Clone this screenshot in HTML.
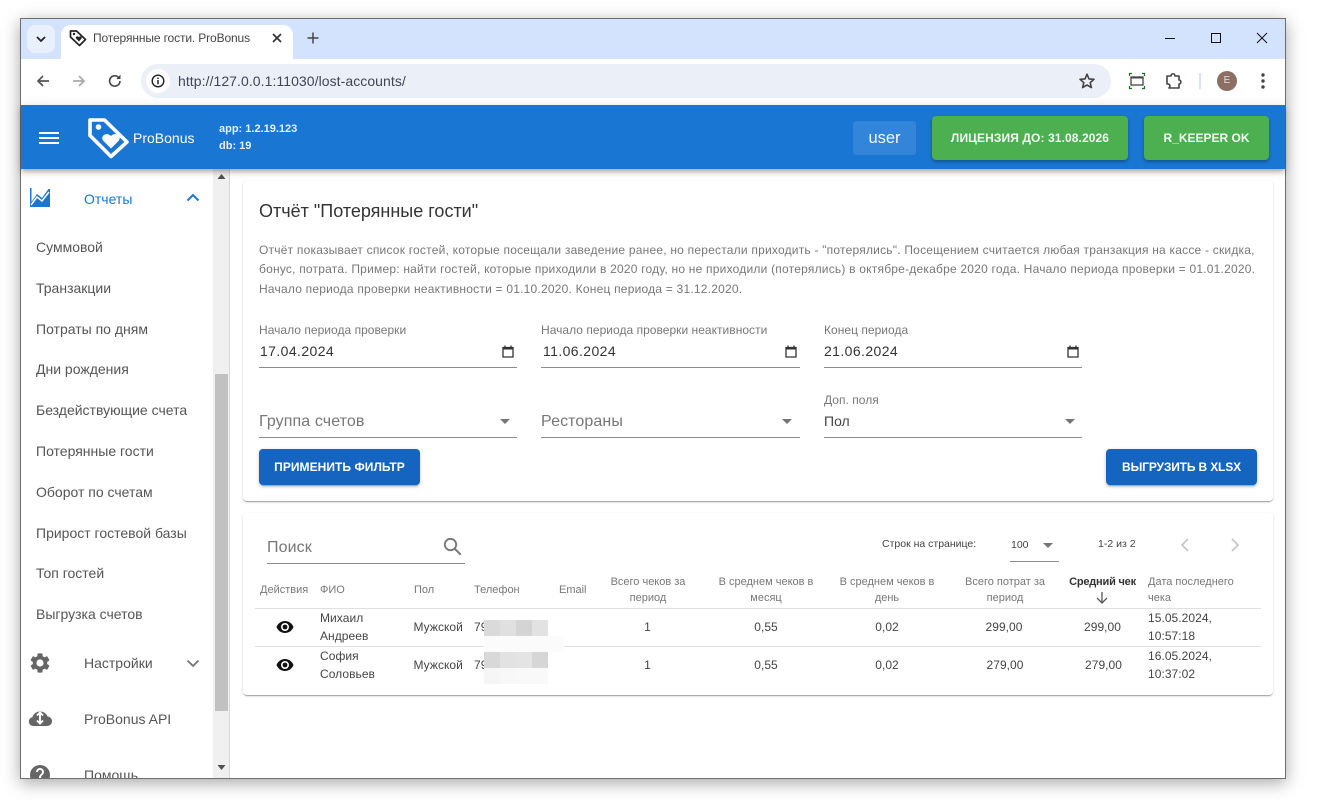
<!DOCTYPE html>
<html lang="ru"><head><meta charset="utf-8"><title>Потерянные гости. ProBonus</title>
<style>
html,body{margin:0;padding:0;background:#fff;width:1318px;height:800px;overflow:hidden}
body{font-family:"Liberation Sans",sans-serif;position:relative}
div,span,svg{position:absolute}
.t{white-space:nowrap;line-height:20px;height:20px}
.c{text-align:center;transform:translateX(-50%)}
.nav{left:15px;font-size:14px;color:#555;letter-spacing:0}
.card{background:#fff;border-radius:4px;box-shadow:0 2px 1px -1px rgba(0,0,0,.2),0 1px 1px rgba(0,0,0,.14),0 1px 3px rgba(0,0,0,.12)}
.lbl{font-size:12px;color:#777;letter-spacing:.03px}
.val{font-size:14px;color:#333;letter-spacing:.4px}
.line{border-top:1px solid #8c8c8c;box-sizing:border-box;height:2px;background:none}
.ph{font-size:16px;color:#777;letter-spacing:.1px}
.btn{background:#1565c0;border-radius:4px;color:#fff;font-weight:bold;font-size:12px;text-align:center;line-height:36px;letter-spacing:.05px;box-shadow:0 3px 1px -2px rgba(0,0,0,.2),0 2px 2px rgba(0,0,0,.14),0 1px 5px rgba(0,0,0,.12)}
.th{font-size:11px;color:#777;line-height:16px;white-space:nowrap;letter-spacing:0}
.td{font-size:12px;color:#444;white-space:nowrap;line-height:18px;letter-spacing:.05px}
.hr{height:1px;background:#e0e0e0;left:255px;width:1006px}
.arrow{width:0;height:0;border-left:5px solid transparent;border-right:5px solid transparent;border-top:5px solid #757575}
</style></head><body>
<!-- window -->
<div style="left:20px;top:18px;width:1266px;height:761px;background:#fff;border:1px solid #6e6e6e;box-sizing:border-box;box-shadow:0 4px 16px rgba(0,0,0,.35);overflow:hidden">
<div style="left:0;top:0;width:1264px;height:40px;background:#d3e3fd"></div>
<div style="left:0;top:40px;width:1264px;height:46px;background:#fff;border-radius:8px 8px 0 0;border-bottom:1px solid #d5d9e0;box-sizing:content-box"></div>
<div style="left:6px;top:6px;width:28px;height:28px;border-radius:8px;background:#e9f0fd"></div>
<svg style="left:13px;top:13px" width="14" height="14" viewBox="0 0 14 14"><path d="M3 5l4 4 4-4" fill="none" stroke="#222" stroke-width="1.8"/></svg>
<div style="left:40px;top:6px;width:232px;height:34px;background:#fff;border-radius:10px 10px 0 0"></div>
<svg style="left:48px;top:10px" width="18" height="18" viewBox="0 0 18 18"><path d="M1.500 2h6l9 8.500-6 6L1.500 8z" fill="none" stroke="#222" stroke-width="1.700" stroke-linejoin="round"/><circle cx="5" cy="5" r="1.200" fill="#222"/><path d="M9.500 13l-3-3c-1-1.500 1.500-3 3-1.500 1.500-1.500 3.500 0 2.500 1.500z" fill="#222" transform="translate(.5 -.5)"/></svg>
</div>
<div class="t" style="left:93px;top:28px;font-size:12px;color:#444;letter-spacing:-.13px">Потерянные гости. ProBonus</div>
<svg style="left:271px;top:32px" width="12" height="12" viewBox="0 0 12 12"><path d="M2 2l8 8M10 2l-8 8" stroke="#333" stroke-width="1.700"/></svg>
<svg style="left:306px;top:31px" width="14" height="14" viewBox="0 0 14 14"><path d="M7 1.500v11M1.500 7h11" stroke="#444" stroke-width="1.500"/></svg>
<svg style="left:1165px;top:38px" width="11" height="2"><rect width="10" height="1" fill="#111"/></svg>
<svg style="left:1211px;top:33px" width="12" height="12"><rect x=".5" y=".5" width="9" height="9" fill="none" stroke="#111"/></svg>
<svg style="left:1256px;top:32px" width="12" height="12"><path d="M1 1l10 10M11 1L1 11" stroke="#111" stroke-width="1"/></svg>
<svg style="left:35px;top:73px" width="16" height="16" viewBox="0 0 16 16"><path d="M14 8H3M8 3L3 8l5 5" fill="none" stroke="#555" stroke-width="1.700"/></svg>
<svg style="left:71px;top:73px" width="16" height="16" viewBox="0 0 16 16"><path d="M2 8h11M8 3l5 5-5 5" fill="none" stroke="#aaa" stroke-width="1.700"/></svg>
<svg style="left:107px;top:73px" width="16" height="16" viewBox="0 0 16 16"><path d="M13 8a5.200 5.200 0 1 1-1.500-3.700" fill="none" stroke="#444" stroke-width="1.600"/><path d="M13.500 1.800v4.200H9.300z" fill="#444"/></svg>
<div style="left:141px;top:64px;width:970px;height:34px;border-radius:17px;background:#ebeff8"></div>
<div style="left:146px;top:69px;width:24px;height:24px;border-radius:12px;background:#fff"></div>
<svg style="left:151px;top:74px" width="14" height="14" viewBox="0 0 14 14"><circle cx="7" cy="7" r="5.800" fill="none" stroke="#222" stroke-width="1.400"/><path d="M7 6v4.200M7 3.600v1.400" stroke="#222" stroke-width="1.500"/></svg>
<div class="t" style="left:178px;top:71px;font-size:14px;color:#3f4654;letter-spacing:.065px">http://127.0.0.1:11030/lost-accounts/</div>
<svg style="left:1078px;top:72px" width="18" height="18" viewBox="0 0 18 18"><path d="M9 2.200l2 4.700 5 .4-3.800 3.300 1.200 5L9 13l-4.400 2.600 1.200-5L2 7.300l5-.4z" fill="none" stroke="#444" stroke-width="1.600" stroke-linejoin="round"/></svg>
<svg style="left:1128px;top:72px" width="18" height="18" viewBox="0 0 18 18"><rect x="3" y="5" width="12" height="8" fill="none" stroke="#444" stroke-width="1.300"/><rect x="3" y="4.500" width="12" height="2" fill="#444"/><path d="M1.500 4V1.500H4M14 1.500h2.500V4M1.500 14v2.500H4M14 16.500h2.500V14" fill="none" stroke="#1b6e20" stroke-width="1.200"/></svg>
<svg style="left:1165px;top:72px" width="18" height="18" viewBox="0 0 18 18"><path d="M2 4h4c0-3 4-3 4 0h4v4c2.500 0 2.500 4 0 4v4H4c1.500-1.500 1-4-1-4H2z" fill="none" stroke="#444" stroke-width="1.600" stroke-linejoin="round"/></svg>
<div style="left:1199px;top:73px;width:2px;height:16px;background:#d3e3fd"></div>
<div style="left:1217px;top:71px;width:20px;height:20px;border-radius:10px;background:#8d6e63;color:#e8e0dc;font-size:10px;line-height:20px;text-align:center">E</div>
<svg style="left:1260px;top:73px" width="6" height="16"><circle cx="3" cy="2" r="1.700" fill="#444"/><circle cx="3" cy="8" r="1.700" fill="#444"/><circle cx="3" cy="14" r="1.700" fill="#444"/></svg>

<!-- content region -->
<div style="left:21px;top:169px;width:1264px;height:609px;background:#fff;overflow:hidden">
  <div style="left:0;top:0;width:192px;height:609px;background:#fff"></div>
  <div style="left:192px;top:0;width:16px;height:609px;background:#f0f0f0;border-right:1px solid #d8d8d8"></div>
  <div style="left:194px;top:205px;width:13px;height:337px;background:#c1c1c1"></div>
  <svg style="left:196px;top:5px" width="9" height="6"><path d="M4.500 0L8.500 5h-8z" fill="#505050"/></svg>
  <svg style="left:196px;top:596px" width="9" height="6"><path d="M.5 0h8L4.500 5z" fill="#505050"/></svg>
  <svg style="left:9px;top:19px" width="20" height="19" viewBox="0 0 20 19"><path d="M0 0h1.500v14L7 6l5 4 6.500-9H20v18H0z" fill="#1976d2"/><path d="M1 17l6-8 5 4 7-9" fill="none" stroke="#fff" stroke-width="1.500"/></svg>
  <div class="t nav" style="left:63px;top:20px;color:#1976d2">Отчеты</div>
  <svg style="left:165px;top:24px" width="14" height="9"><path d="M1.500 7.500L7 2l5.500 5.500" fill="none" stroke="#1976d2" stroke-width="2"/></svg>
  <div class="t nav" style="top:68px">Суммовой</div>
  <div class="t nav" style="top:109px">Транзакции</div>
  <div class="t nav" style="top:150px">Потраты по дням</div>
  <div class="t nav" style="top:190px">Дни рождения</div>
  <div class="t nav" style="top:231px">Бездействующие счета</div>
  <div class="t nav" style="top:272px">Потерянные гости</div>
  <div class="t nav" style="top:313px">Оборот по счетам</div>
  <div class="t nav" style="top:354px">Прирост гостевой базы</div>
  <div class="t nav" style="top:394px">Топ гостей</div>
  <div class="t nav" style="top:435px">Выгрузка счетов</div>
  <svg style="left:7px;top:482px" width="24" height="24" viewBox="0 0 24 24"><path fill="#666" d="M19.140 12.940c.04-.3.060-.61.060-.94s-.02-.64-.07-.94l2.030-1.580a.5.5 0 0 0 .12-.61l-1.920-3.320a.5.5 0 0 0-.59-.22l-2.390.96a7 7 0 0 0-1.620-.94l-.36-2.540a.48.480 0 0 0-.48-.41h-3.840a.48.480 0 0 0-.47.410l-.36 2.540c-.59.24-1.130.57-1.620.94l-2.390-.96a.48.480 0 0 0-.59.220L2.740 8.870a.48.480 0 0 0 .12.610l2.030 1.580c-.05.3-.09.63-.09.940s.02.640.07.940l-2.030 1.580a.5.5 0 0 0-.12.610l1.920 3.320c.12.220.37.290.59.220l2.390-.96c.5.380 1.030.7 1.620.94l.36 2.540c.05.240.24.410.48.410h3.840c.24 0 .44-.17.470-.41l.36-2.540c.59-.24 1.130-.56 1.620-.94l2.390.96c.22.080.47 0 .59-.22l1.920-3.320a.48.480 0 0 0-.12-.61zM12 15.600a3.600 3.600 0 1 1 0-7.200 3.600 3.600 0 0 1 0 7.200z"/></svg>
  <div class="t nav" style="left:63px;top:484px">Настройки</div>
  <svg style="left:165px;top:490px" width="14" height="9"><path d="M1.500 1.500L7 7l5.500-5.500" fill="none" stroke="#757575" stroke-width="1.800"/></svg>
  <svg style="left:7px;top:539px" width="24" height="22" viewBox="0 0 24 22"><path fill="#666" d="M5 18a4.500 4.500 0 0 1-.6-8.900A8 8 0 0 1 19.500 8.400 4.800 4.800 0 0 1 19 18z"/><path d="M12 5v10M9 7.500l3-3 3 3M9 12.500l3 3 3-3" stroke="#fff" stroke-width="1.900" fill="none"/></svg>
  <div class="t nav" style="left:63px;top:540px">ProBonus API</div>
  <svg style="left:7px;top:594px" width="24" height="24" viewBox="0 0 24 24"><path fill="#666" d="M12 2a10 10 0 1 0 0 20 10 10 0 0 0 0-20zm1 17h-2v-2h2zm2.100-7.700l-.9.900c-.7.700-1.200 1.300-1.200 2.800h-2v-.5c0-1.100.5-2.100 1.200-2.800l1.200-1.300c.4-.3.600-.8.600-1.400a2 2 0 0 0-4 0H8a4 4 0 0 1 8 0c0 .9-.4 1.700-.9 2.300z"/></svg>
  <div class="t nav" style="left:63px;top:596px">Помощь</div>
</div>

<!-- app bar -->
<div style="left:21px;top:105px;width:1264px;height:64px;background:#1976d2;box-shadow:0 2px 4px -1px rgba(0,0,0,.2),0 4px 5px rgba(0,0,0,.14),0 1px 10px rgba(0,0,0,.12)"></div>
<svg style="left:39px;top:131px" width="20" height="14"><rect y="1" width="20" height="2" fill="#fff"/><rect y="6" width="20" height="2" fill="#fff"/><rect y="11" width="20" height="2" fill="#fff"/></svg>
<svg style="left:88px;top:117px" width="42" height="42" viewBox="0 0 42 42"><path d="M2 3h14.500L39 25 23 39.500 2 18.500z" fill="none" stroke="#fff" stroke-width="3.600" stroke-linejoin="round"/><circle cx="10.500" cy="10" r="2.800" fill="#fff"/><path d="M23 31.500l-8-8c-3-4.500 3.500-9 8-4.500 4.500-4.500 11-.5 8 4.500z" fill="#fff"/></svg>
<div class="t" style="left:133px;top:128px;font-size:14px;color:#fff;letter-spacing:0">ProBonus</div>
<div class="t" style="left:219px;top:119px;font-size:11px;font-weight:bold;color:#e6f0fa">app: 1.2.19.123</div>
<div class="t" style="left:219px;top:136px;font-size:11px;font-weight:bold;color:#e6f0fa">db: 19</div>
<div style="left:853px;top:121px;width:63px;height:34px;background:#3586db;border-radius:3px;color:#fff;opacity:.95;font-size:16.500px;line-height:34px;text-align:center">user</div>
<div style="left:932px;top:116px;width:196px;height:44px;background:#4caf50;border-radius:4px;color:#f3f8f3;font-weight:bold;font-size:12px;line-height:44px;text-align:center;letter-spacing:.1px;box-shadow:0 2px 3px rgba(0,0,0,.3)">ЛИЦЕНЗИЯ ДО: 31.08.2026</div>
<div style="left:1144px;top:116px;width:125px;height:44px;background:#4caf50;border-radius:4px;color:#f3f8f3;font-weight:bold;font-size:12px;line-height:44px;text-align:center;box-shadow:0 2px 3px rgba(0,0,0,.3)">R_KEEPER OK</div>

<!-- report card -->
<div class="card" style="left:243px;top:181px;width:1030px;height:320px"></div>
<div class="t" style="left:259px;top:201px;font-size:18px;color:#333;letter-spacing:0">Отчёт "Потерянные гости"</div>
<div class="t" style="left:259px;top:240px;font-size:12px;color:#777;letter-spacing:.215px">Отчёт показывает список гостей, которые посещали заведение ранее, но перестали приходить - "потерялись". Посещением считается любая транзакция на кассе - скидка,</div>
<div class="t" style="left:259px;top:259px;font-size:12px;color:#777;letter-spacing:.215px">бонус, потрата. Пример: найти гостей, которые приходили в 2020 году, но не приходили (потерялись) в октябре-декабре 2020 года. Начало периода проверки = 01.01.2020.</div>
<div class="t" style="left:259px;top:279px;font-size:12px;color:#777;letter-spacing:.215px">Начало периода проверки неактивности = 01.10.2020. Конец периода = 31.12.2020.</div>

<div class="t lbl" style="left:259px;top:320px">Начало периода проверки</div>
<div class="t val" style="left:260px;top:341px">17.04.2024</div>
<div class="line" style="left:259px;top:367px;width:258px"></div>
<div class="t lbl" style="left:541px;top:320px">Начало периода проверки неактивности</div>
<div class="t val" style="left:543px;top:341px">11.06.2024</div>
<div class="line" style="left:541px;top:367px;width:259px"></div>
<div class="t lbl" style="left:824px;top:320px">Конец периода</div>
<div class="t val" style="left:824px;top:341px">21.06.2024</div>
<div class="line" style="left:824px;top:367px;width:258px"></div>
<svg style="left:502px;top:345px" width="12" height="13" viewBox="0 0 12 13"><path d="M1 2.500h10v9.500H1zM3 .5v2M9 .5v2" fill="none" stroke="#333" stroke-width="1.300"/><rect x="1" y="2" width="10" height="2.500" fill="#333"/></svg>
<svg style="left:785px;top:345px" width="12" height="13" viewBox="0 0 12 13"><path d="M1 2.500h10v9.500H1zM3 .5v2M9 .5v2" fill="none" stroke="#333" stroke-width="1.300"/><rect x="1" y="2" width="10" height="2.500" fill="#333"/></svg>
<svg style="left:1067px;top:345px" width="12" height="13" viewBox="0 0 12 13"><path d="M1 2.500h10v9.500H1zM3 .5v2M9 .5v2" fill="none" stroke="#333" stroke-width="1.300"/><rect x="1" y="2" width="10" height="2.500" fill="#333"/></svg>

<div class="t ph" style="left:259px;top:412px">Группа счетов</div>
<div class="arrow" style="left:500px;top:419px"></div>
<div class="line" style="left:259px;top:437px;width:258px"></div>
<div class="t ph" style="left:541px;top:412px">Рестораны</div>
<div class="arrow" style="left:782px;top:419px"></div>
<div class="line" style="left:541px;top:437px;width:259px"></div>
<div class="t lbl" style="left:824px;top:390px">Доп. поля</div>
<div class="t" style="left:824px;top:411px;font-size:14px;color:#444">Пол</div>
<div class="arrow" style="left:1065px;top:419px"></div>
<div class="line" style="left:824px;top:437px;width:258px"></div>
<div class="btn" style="left:259px;top:449px;width:161px;height:36px">ПРИМЕНИТЬ ФИЛЬТР</div>
<div class="btn" style="left:1106px;top:449px;width:151px;height:36px;letter-spacing:-.15px">ВЫГРУЗИТЬ В XLSX</div>

<!-- table card -->
<div class="card" style="left:243px;top:513px;width:1030px;height:182px"></div>
<div class="t ph" style="left:267px;top:538px">Поиск</div>
<svg style="left:442px;top:536px" width="21" height="21" viewBox="0 0 21 21"><circle cx="8.500" cy="8.500" r="5.700" fill="none" stroke="#757575" stroke-width="1.800"/><path d="M12.700 12.700l6 6" stroke="#757575" stroke-width="2"/></svg>
<div class="line" style="left:267px;top:563px;width:198px"></div>
<div class="t" style="left:882px;top:534px;font-size:10.500px;color:#444">Строк на странице:</div>
<div class="t" style="left:1011px;top:535px;font-size:10.500px;color:#444">100</div>
<div class="arrow" style="left:1043px;top:543px"></div>
<div style="left:1010px;top:561px;width:49px;height:1px;background:#8c8c8c"></div>
<div class="t" style="left:1098px;top:534px;font-size:10.500px;color:#444">1-2 из 2</div>
<svg style="left:1179px;top:537px" width="12" height="16"><path d="M9 2L3 8l6 6" fill="none" stroke="#c4c4c4" stroke-width="1.600"/></svg>
<svg style="left:1229px;top:537px" width="12" height="16"><path d="M3 2l6 6-6 6" fill="none" stroke="#c4c4c4" stroke-width="1.600"/></svg>

<div class="th" style="left:260px;top:582px">Действия</div>
<div class="th" style="left:320px;top:582px">ФИО</div>
<div class="th" style="left:414px;top:582px">Пол</div>
<div class="th" style="left:474px;top:582px">Телефон</div>
<div class="th" style="left:559px;top:582px">Email</div>
<div class="th c" style="left:648px;top:574px">Всего чеков за<br>период</div>
<div class="th c" style="left:766px;top:574px">В среднем чеков в<br>месяц</div>
<div class="th c" style="left:887px;top:574px">В среднем чеков в<br>день</div>
<div class="th c" style="left:1005px;top:574px">Всего потрат за<br>период</div>
<div class="th c" style="left:1102.500px;top:574px;color:#333;font-weight:bold;letter-spacing:-.2px">Средний чек</div>
<svg style="left:1095px;top:591px" width="14" height="14" viewBox="0 0 14 14"><path d="M7 1v11M2 7l5 5 5-5" fill="none" stroke="#555" stroke-width="1.300"/></svg>
<div class="th" style="left:1148px;top:574px">Дата последнего<br>чека</div>
<div class="hr" style="top:608px"></div>
<div class="hr" style="top:646px"></div>

<svg style="left:276px;top:620px" width="18" height="14" viewBox="0 0 18 14"><path d="M9 1C5 1 1.800 3.500.5 7 1.800 10.500 5 13 9 13s7.200-2.500 8.500-6C16.200 3.500 13 1 9 1zm0 10a4 4 0 1 1 0-8 4 4 0 0 1 0 8z" fill="#111"/><circle cx="9" cy="7" r="2.400" fill="#111"/></svg>
<svg style="left:276px;top:658px" width="18" height="14" viewBox="0 0 18 14"><path d="M9 1C5 1 1.800 3.500.5 7 1.800 10.500 5 13 9 13s7.200-2.500 8.500-6C16.200 3.500 13 1 9 1zm0 10a4 4 0 1 1 0-8 4 4 0 0 1 0 8z" fill="#111"/><circle cx="9" cy="7" r="2.400" fill="#111"/></svg>
<div class="td" style="left:320px;top:609px">Михаил<br>Андреев</div>
<div class="td" style="left:320px;top:647px">София<br>Соловьев</div>
<div class="td" style="left:413.500px;top:618px">Мужской</div>
<div class="td" style="left:413.500px;top:656px">Мужской</div>
<div class="td" style="left:474px;top:618px">79</div>
<div class="td" style="left:474px;top:656px">79</div>
<svg style="left:484px;top:620px" width="80" height="66" shape-rendering="crispEdges">
<rect x="0" y="0" width="16" height="16" fill="#dadada"/><rect x="16" y="0" width="16" height="16" fill="#e0e0e0"/><rect x="32" y="0" width="16" height="16" fill="#d4d4d4"/><rect x="48" y="0" width="16" height="16" fill="#e2e2e2"/>
<rect x="0" y="16" width="80" height="16" fill="#fbfbfb"/>
<rect x="0" y="32" width="16" height="16" fill="#d8d8d8"/><rect x="16" y="32" width="16" height="16" fill="#e2e2e2"/><rect x="32" y="32" width="16" height="16" fill="#e4e4e4"/><rect x="48" y="32" width="16" height="16" fill="#d6d6d6"/>
<rect x="0" y="48" width="16" height="16" fill="#f6f6f6"/><rect x="16" y="48" width="16" height="16" fill="#f8f8f8"/><rect x="32" y="48" width="32" height="16" fill="#f9f9f9"/>
</svg>
<div class="td c" style="left:647.500px;top:618px">1</div>
<div class="td c" style="left:647.500px;top:656px">1</div>
<div class="td c" style="left:766px;top:618px">0,55</div>
<div class="td c" style="left:766px;top:656px">0,55</div>
<div class="td c" style="left:887px;top:618px">0,02</div>
<div class="td c" style="left:887px;top:656px">0,02</div>
<div class="td c" style="left:1004px;top:618px">299,00</div>
<div class="td c" style="left:1005px;top:656px">279,00</div>
<div class="td c" style="left:1102.500px;top:618px">299,00</div>
<div class="td c" style="left:1103.500px;top:656px">279,00</div>
<div class="td" style="left:1148px;top:609px">15.05.2024,<br>10:57:18</div>
<div class="td" style="left:1148px;top:647px">16.05.2024,<br>10:37:02</div>
</body></html>
